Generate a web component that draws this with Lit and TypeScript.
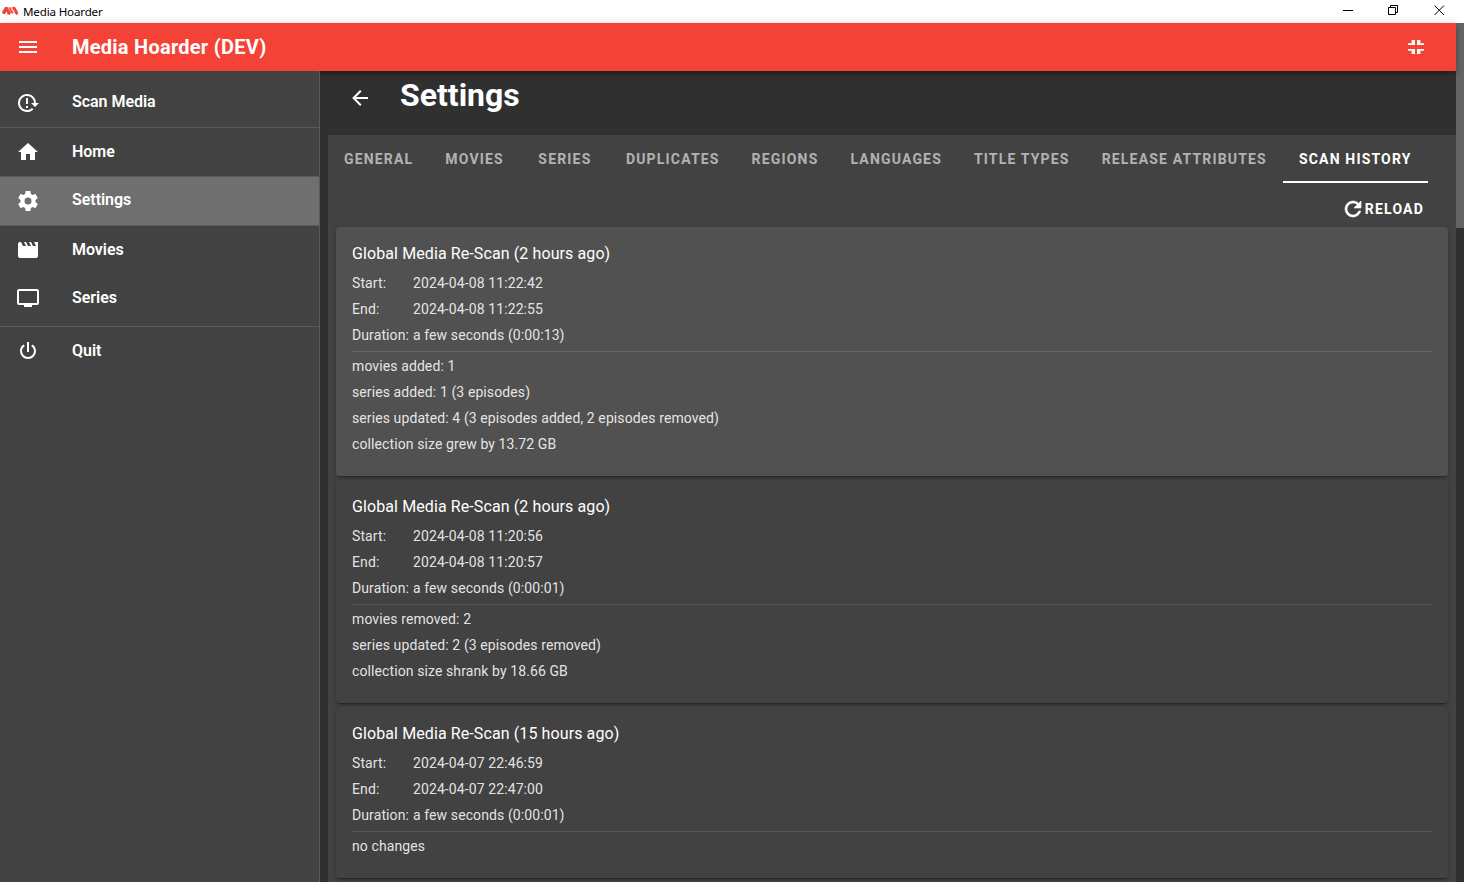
import { LitElement, html, css, svg } from "lit";
import { customElement } from "lit/decorators.js";

const icons: Record<string, string> = {
  menu: "M3,6H21V8H3V6M3,11H21V13H3V11M3,16H21V18H3V16Z",
  scan: "M2 12C2 16.97 6.03 21 11 21C13.39 21 15.68 20.06 17.4 18.4L15.9 16.9C14.63 18.25 12.86 19 11 19C4.76 19 1.64 11.46 6.05 7.05C10.46 2.64 18 5.77 18 12H15L19 16H19.1L23 12H20C20 7.03 15.97 3 11 3C6.03 3 2 7.03 2 12M10 7V13H12V7H10M10 15V17H12V15H10Z",
  home: "M10,20V14H14V20H19V12H22L12,3L2,12H5V20H10Z",
  cog: "M12,15.5A3.5,3.5 0 0,1 8.5,12A3.5,3.5 0 0,1 12,8.5A3.5,3.5 0 0,1 15.5,12A3.5,3.5 0 0,1 12,15.5M19.43,12.97C19.47,12.65 19.5,12.33 19.5,12C19.5,11.67 19.47,11.34 19.43,11L21.54,9.37C21.73,9.22 21.78,8.95 21.66,8.73L19.66,5.27C19.54,5.05 19.27,4.96 19.05,5.05L16.56,6.05C16.04,5.66 15.5,5.32 14.87,5.07L14.5,2.42C14.46,2.18 14.25,2 14,2H10C9.75,2 9.54,2.18 9.5,2.42L9.13,5.07C8.5,5.32 7.96,5.66 7.44,6.05L4.95,5.05C4.73,4.96 4.46,5.05 4.34,5.27L2.34,8.73C2.21,8.95 2.27,9.22 2.46,9.37L4.57,11C4.53,11.34 4.5,11.67 4.5,12C4.5,12.33 4.53,12.65 4.57,12.97L2.46,14.63C2.27,14.78 2.21,15.05 2.34,15.27L4.34,18.73C4.46,18.95 4.73,19.03 4.95,18.95L7.44,17.94C7.96,18.34 8.5,18.68 9.13,18.93L9.5,21.58C9.54,21.82 9.75,22 10,22H14C14.25,22 14.46,21.82 14.5,21.58L14.87,18.93C15.5,18.67 16.04,18.34 16.56,17.94L19.05,18.95C19.27,19.03 19.54,18.95 19.66,18.73L21.66,15.27C21.78,15.05 21.73,14.78 21.54,14.63L19.43,12.97Z",
  movie: "M18,4L20,8H17L15,4H13L15,8H12L10,4H8L10,8H7L5,4H4A2,2 0 0,0 2,6V18A2,2 0 0,0 4,20H20A2,2 0 0,0 22,18V4H18Z",
  tv: "M21,17H3V5H21M21,3H3A2,2 0 0,0 1,5V17A2,2 0 0,0 3,19H8V21H16V19H21A2,2 0 0,0 23,17V5A2,2 0 0,0 21,3Z",
  power: "M16.56,5.44L15.11,6.89C16.84,7.94 18,9.83 18,12A6,6 0 0,1 12,18A6,6 0 0,1 6,12C6,9.83 7.16,7.94 8.88,6.88L7.44,5.44C5.36,6.88 4,9.28 4,12A8,8 0 0,0 12,20A8,8 0 0,0 20,12C20,9.28 18.64,6.88 16.56,5.44M13,3H11V13H13",
  back: "M20,11V13H8L13.5,18.5L12.08,19.92L4.16,12L12.08,4.08L13.5,5.5L8,11H20Z",
  refresh: "M17.65,6.35C16.2,4.9 14.21,4 12,4A8,8 0 0,0 4,12A8,8 0 0,0 12,20C15.73,20 18.84,17.45 19.73,14H17.65C16.83,16.33 14.61,18 12,18A6,6 0 0,1 6,12A6,6 0 0,1 12,6C13.66,6 15.14,6.69 16.22,7.78L13,11H20V4L17.65,6.35Z",
  collapse: "M7.600,5H11V10H4V8.300H7.600ZM13,5H16.400V8.300H20V10H13ZM4,14H11V19H7.600V15.700H4ZM13,14H20V15.700H16.400V19H13Z",
};

const icon = (name: string, extra = "") =>
  html`<svg class=${extra} width="24" height="24" viewBox="0 0 24 24" fill="currentColor">${svg`<path d=${icons[name]} />`}</svg>`;

const tabs = ["General", "Movies", "Series", "Duplicates", "Regions", "Languages", "Title Types", "Release Attributes", "Scan History"];

const scans = [
  { ago: "2 hours ago", start: "2024-04-08 11:22:42", end: "2024-04-08 11:22:55", duration: "a few seconds (0:00:13)",
    lines: ["movies added: 1", "series added: 1 (3 episodes)", "series updated: 4 (3 episodes added, 2 episodes removed)", "collection size grew by 13.72 GB"] },
  { ago: "2 hours ago", start: "2024-04-08 11:20:56", end: "2024-04-08 11:20:57", duration: "a few seconds (0:00:01)",
    lines: ["movies removed: 2", "series updated: 2 (3 episodes removed)", "collection size shrank by 18.66 GB"] },
  { ago: "15 hours ago", start: "2024-04-07 22:46:59", end: "2024-04-07 22:47:00", duration: "a few seconds (0:00:01)",
    lines: ["no changes"] },
];

@customElement("app-root")
export class AppRoot extends LitElement {
  static styles = css`
    :host { display: flex; flex-direction: column; height: 882px; overflow: hidden; background: #303030; color: #fff; font-family: Roboto, sans-serif; }
    * { box-sizing: border-box; }
    svg { display: block; flex: none; }
    .titlebar { height: 23px; flex: none; background: #fff; color: #000; display: flex; align-items: center; font: 12px/16px "Noto Sans", "Open Sans", sans-serif; }
    .logo { margin: 0 4px 1px 2px; }
    .wtitle { flex: 1; font-size: 11.6px; letter-spacing: -0.17px; }
    .controls { margin-bottom: 2px; }
    .window { flex: 1; display: flex; min-height: 0; }
    .page { flex: 1; display: flex; flex-direction: column; min-width: 0; }
    .scroll { width: 8px; background: #303030; }
    .thumb { height: 205px; background: #646464; }
    .appbar { position: relative; z-index: 2; height: 48px; flex: none; background: #f44336; display: flex; align-items: center; padding: 0 28px 0 16px; box-shadow: 0 2px 4px -1px rgba(0,0,0,.2), 0 4px 5px rgba(0,0,0,.14), 0 1px 10px rgba(0,0,0,.12); }
    .apptitle { margin-left: 32px; flex: 1; font-size: 20px; line-height: 24px; font-weight: 700; letter-spacing: .25px; }
    .body { flex: 1; display: flex; min-height: 0; }
    .drawer { position: relative; z-index: 3; width: 320px; flex: none; background: #424242; border-right: 1px solid #5a5a5a; padding-top: 8px; }
    .item { display: flex; align-items: center; height: 48px; padding-left: 16px; gap: 32px; font-size: 16px; line-height: 20px; font-weight: 600; letter-spacing: -0.04px; }
    .item.raised span { margin-bottom: 2px; }
    .item.active { background: #6f6f6f; }
    .rule { height: 1px; background: #5a5a5a; }
    .rule.spaced { margin-top: 4px; }
    .content { flex: 1; min-width: 0; display: flex; flex-direction: column; padding-left: 8px; }
    .head { height: 64px; flex: none; display: flex; padding-left: 20px; }
    .head svg { margin-top: 15px; }
    h1 { margin: 0 0 0 28px; font-size: 32px; line-height: 48px; font-weight: 700; }
    .sheet { flex: 1; min-height: 0; background: #424242; }
    .tabs { display: flex; height: 48px; }
    .tab { min-width: 90px; padding: 0 16px; text-align: center; font-size: 14px; line-height: 48px; font-weight: 700; letter-spacing: 1.175px; text-transform: uppercase; color: rgba(255,255,255,.6); white-space: nowrap; }
    .tab.active { color: #fff; border-bottom: 2px solid #fff; }
    .tools { height: 44px; padding: 8px 32px 0 0; display: flex; justify-content: flex-end; align-items: center; font-size: 14px; font-weight: 700; letter-spacing: 1.2px; }
    .thick { stroke: currentColor; stroke-width: .6; }
    .card { margin: 0 8px 4px; padding: 17px 16px 19px; border-radius: 4px; background: #424242; box-shadow: 0 3px 1px -2px rgba(0,0,0,.2), 0 2px 2px rgba(0,0,0,.14), 0 1px 5px rgba(0,0,0,.12); font-size: 14px; line-height: 26px; font-weight: 400; letter-spacing: .1px; color: rgba(255,255,255,.87); }
    .card.hover { background: #515151; }
    .card h2 { margin: 0 0 6px; font-size: 16px; line-height: 20px; font-weight: 400; color: #fff; }
    .row { display: flex; }
    .label { width: 61px; }
    .sep { height: 1px; background: rgba(255,255,255,.12); margin: 3px 0 1px; }
  `;

  item(name: string, label: string, state = "") {
    return html`<div class="item ${state}">${icon(name)}<span>${label}</span></div>`;
  }

  render() {
    return html`
      <div class="titlebar">
        <svg class="logo" width="17" height="10" viewBox="0 0 17 10" fill="#f44336"><path d="M0 6L3 1H5.500L9 7L7.500 9L5.500 8L4.500 5.500L3 8H1ZM6.500 1.500L8 1L11.500 6.500L10 8ZM9.500 1.500L11 1H13L16 6V8L14.500 9L13 7.500L12 5Z" /></svg>
        <span class="wtitle">Media Hoarder</span>
        <svg class="controls" width="121" height="22" viewBox="0 0 121 22" fill="none" stroke="#000"><path d="M0 10.500H10M45.500 7.500H52.500V14.500H45.500ZM47.500 7.500V5.500H54.500V12.500H52.500M91.500 5.500L101 15M101 5.500L91.500 15" /></svg>
      </div>
      <div class="window">
        <div class="page">
          <header class="appbar">${icon("menu")}<span class="apptitle">Media Hoarder (DEV)</span>${icon("collapse")}</header>
          <div class="body">
            <nav class="drawer">
              ${this.item("scan", "Scan Media", "raised")}
              <div class="rule"></div>
              ${this.item("home", "Home")}
              <div class="rule"></div>
              ${this.item("cog", "Settings", "raised active")}
              <div class="rule"></div>
              ${this.item("movie", "Movies")}
              ${this.item("tv", "Series")}
              <div class="rule spaced"></div>
              ${this.item("power", "Quit")}
            </nav>
            <main class="content">
              <div class="head">${icon("back")}<h1>Settings</h1></div>
              <section class="sheet">
                <div class="tabs">${tabs.map((t, i) => html`<div class="tab ${i === 8 ? "active" : ""}">${t}</div>`)}</div>
                <div class="tools">${icon("refresh", "thick")}<span>RELOAD</span></div>
                ${scans.map((s, i) => html`
                  <article class="card ${i === 0 ? "hover" : ""}">
                    <h2>Global Media Re-Scan (${s.ago})</h2>
                    <div class="row"><span class="label">Start:</span><span>${s.start}</span></div>
                    <div class="row"><span class="label">End:</span><span>${s.end}</span></div>
                    <div class="row"><span class="label">Duration:</span><span>${s.duration}</span></div>
                    <div class="sep"></div>
                    ${s.lines.map((l) => html`<div>${l}</div>`)}
                  </article>`)}
              </section>
            </main>
          </div>
        </div>
        <div class="scroll"><div class="thumb"></div></div>
      </div>`;
  }
}
